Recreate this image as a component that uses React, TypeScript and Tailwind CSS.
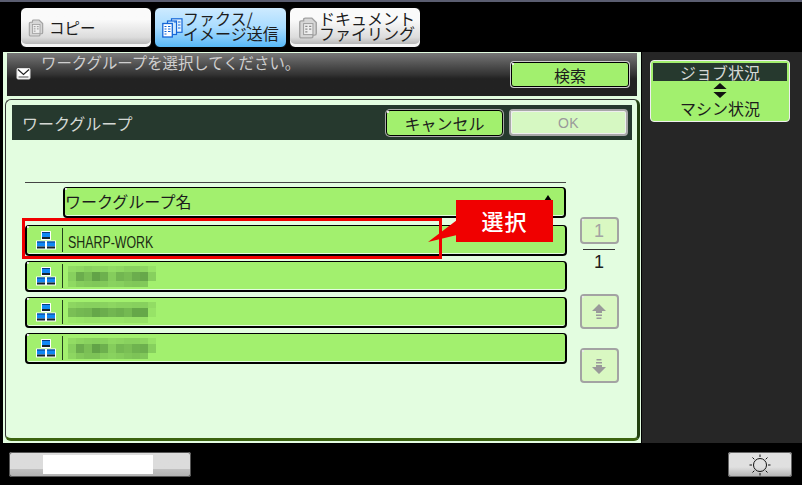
import React from "react";

const FONT = "[font-family:'Noto_Sans_CJK_JP','Noto_Sans',sans-serif]";

function Dot() {
  return <span className="absolute left-0 top-0 h-[2px] w-[2px] bg-[#e8e8e8]" />;
}

function DocsIcon({ w, h }: { w: number; h: number }) {
  return (
    <svg width={w} height={h} viewBox="0 0 18 20" className="shrink-0">
      <path d="M1.500 5 Q1.500 3.500 3 3.500 H5 V2 Q5 1 6.500 1 H12.500 L16.500 5 V15 Q16.500 16.500 15 16.500 H13.500 V17.500 Q13.500 19 12 19 H3 Q1.500 19 1.500 17.500 Z" fill="#d6d6d6" stroke="#a2a2a2" strokeWidth="1.300" />
      <rect x="5" y="6" width="8.500" height="10" fill="#eeeeee" stroke="#9c9c9c" strokeWidth="0.900" />
      <path d="M6.500 8.500h2M6.500 11h2M6.500 13.500h2M10 8.500h2M10 11h2" stroke="#8a8a8a" strokeWidth="1" />
    </svg>
  );
}

function FaxIcon() {
  return (
    <svg width="21" height="20" viewBox="0 0 21 20" className="shrink-0">
      <rect x="9.500" y="0.800" width="10.500" height="13.500" fill="#e8f6ff" stroke="#1466d8" strokeWidth="1.200" />
      <rect x="5.500" y="3" width="9" height="13.500" fill="#cfeaff" stroke="#1466d8" strokeWidth="1.200" />
      <rect x="0.800" y="5.500" width="9.500" height="13.500" fill="#fff" stroke="#1466d8" strokeWidth="1.300" />
      <path d="M2.500 8.500h2M2.500 11h2M2.500 13.500h2M2.500 16h2M6 8.500h2.500M6 11h2.500M6 13.500h2.500M12 4h2M16 4h2.500M16 7h2.500M16 10h2.500" stroke="#1466d8" strokeWidth="1" />
    </svg>
  );
}

function Pc({ x, y }: { x: number; y: number }) {
  return (
    <g transform={`translate(${x} ${y})`}>
      <rect x="0" y="0" width="10" height="9" rx="0.500" fill="#fff" />
      <rect x="1" y="1" width="8" height="5" fill="#1088f4" />
      <rect x="1" y="1" width="8" height="1" fill="#0a3a80" />
      <rect x="1" y="6" width="8" height="2" fill="#16242e" />
    </g>
  );
}

function NetIcon() {
  return (
    <svg width="20" height="19" viewBox="0 0 20 19" className="shrink-0">
      <Pc x={5} y={0} />
      <Pc x={0} y={9.500} />
      <Pc x={10} y={9.500} />
    </svg>
  );
}

// alpha values of the pixelated (masked) names, one list per band
const MOSAICS: number[][][] = [
  [
    [0.12, 0.14, 0.18, 0.16, 0.16, 0.12, 0.14, 0.18, 0.18, 0.16, 0.08],
    [0.2, 0.42, 0.32, 0.48, 0.4, 0.22, 0.36, 0.32, 0.42, 0.45, 0.2],
    [0.14, 0.22, 0.24, 0.26, 0.24, 0.18, 0.2, 0.24, 0.26, 0.24, 0],
  ],
  [
    [0.16, 0.18, 0.2, 0.2, 0.18, 0.16, 0.18, 0.18, 0.2, 0.2, 0.12],
    [0.3, 0.34, 0.36, 0.46, 0.42, 0.36, 0.4, 0.34, 0.46, 0.46, 0.08],
    [0.05, 0.07, 0.09, 0.09, 0.07, 0.07, 0.07, 0.09, 0.09, 0.09, 0],
  ],
  [
    [0.12, 0.16, 0.18, 0.2, 0.18, 0.14, 0.16, 0.18, 0.18, 0.16, 0.08],
    [0.2, 0.42, 0.3, 0.48, 0.4, 0.22, 0.34, 0.3, 0.38, 0.4, 0.2],
    [0.16, 0.24, 0.28, 0.28, 0.22, 0.18, 0.22, 0.26, 0.28, 0.26, 0],
  ],
];

function Mosaic({ data }: { data: number[][] }) {
  const heights = ["h-[6px]", "h-[9px]", "h-[6px]"];
  return (
    <div className="ml-[4px] flex flex-col">
      {data.map((band, i) => (
        <div key={i} className={`flex ${heights[i]}`}>
          {band.map((a, j) => (
            <span key={j} className="h-full w-[8px]" style={{ backgroundColor: `rgba(30,80,30,${a})` }} />
          ))}
        </div>
      ))}
    </div>
  );
}

function Row({ children }: { children: React.ReactNode }) {
  return (
    <div className="relative flex h-[31px] w-[542px] items-center rounded-[4px] border border-b-2 border-l-2 border-r-2 border-black bg-[#a2f06e] shadow-[inset_0_-1px_0_#e3fde0]">
      <Dot />
      <div className="ml-[9px] flex w-[26px] shrink-0 items-center justify-start">
        <NetIcon />
      </div>
      <div className="mr-[1px] h-[24px] w-[1px] shrink-0 bg-[#22401c]" />
      {children}
    </div>
  );
}

function PagerButton({ children, h }: { children: React.ReactNode; h: string }) {
  return (
    <div className={`relative flex w-[39px] items-center justify-center rounded-[4px] border-2 border-[#a3a3a3] bg-[#d9f8c2] ${h}`}>
      <Dot />
      {children}
    </div>
  );
}

function Tab({ children, active }: { children: React.ReactNode; active?: boolean }) {
  return (
    <div
      className={`flex h-[41px] items-center rounded-[6px] border border-black ${
        active
          ? "w-[133px] bg-gradient-to-b from-[#cdeaff] via-[#a9dcff] to-[#56b8f6]"
          : "w-[132px] bg-gradient-to-b from-[#fafafa] from-30% via-[#dcdcdc] via-75% to-[#a8a8a8] shadow-[inset_0_-3px_0_#f4f4f4]"
      }`}
    >
      {children}
    </div>
  );
}

export default function App() {
  return (
    <div className={`relative flex h-[485px] w-[802px] flex-col overflow-hidden bg-black text-[16px] text-[#1c1c1c] ${FONT}`}>
      <div className="h-[2px] bg-[#5a5d70]" />

      {/* tabs */}
      <div className="flex h-[50px] gap-[2px] pl-[20px] pt-[5px]">
        <Tab>
          <span className="ml-[7px] flex w-[16px] justify-center"><DocsIcon w={16} h={18} /></span>
          <span className="ml-[5px] text-[15.5px] leading-none">コピー</span>
        </Tab>
        <Tab active>
          <span className="ml-[7px] flex w-[21px] justify-center"><FaxIcon /></span>
          <span className="mb-[3px] flex flex-col pl-[0px] text-[16px] leading-[15px]">
            <span>ファクス/</span>
            <span>イメージ送信</span>
          </span>
        </Tab>
        <Tab>
          <span className="ml-[7px] flex w-[21px] justify-center"><DocsIcon w={20} h={22} /></span>
          <span className="mb-[3px] ml-[1px] flex flex-col text-[16px] leading-[15px]">
            <span>ドキュメント</span>
            <span>ファイリング</span>
          </span>
        </Tab>
      </div>

      {/* body */}
      <div className="flex h-[391px]">
        <div className="ml-[3px] flex w-[638px] flex-col bg-[#e3fde0]">
          {/* message bar */}
          <div className="ml-[4px] mt-[1px] flex h-[43px] w-[630px] items-start bg-gradient-to-b from-[#777] via-[#333] via-50% to-[#222] to-60%">
            <svg width="16" height="14" viewBox="0 0 16 14" className="ml-[9px] mt-[14px] shrink-0">
              <rect x="1" y="1.500" width="13" height="10.500" rx="1" fill="#fff" stroke="#ddd" />
              <path d="M2 2.500 L7.500 7.500 L13 2.500" fill="none" stroke="#222" strokeWidth="1.200" />
              <rect x="2.500" y="9.500" width="10" height="1" fill="#444" />
            </svg>
            <span className="ml-[9px] mt-[-2px] text-[15.4px] leading-[22px] text-[#cfcfcf]">ワークグループを選択してください。</span>
            <div className="relative ml-auto mr-[8px] mt-[9px] flex h-[25px] w-[118px] items-center justify-center rounded-[3px] border-[1.5px] border-black bg-[#a2f06e] shadow-[0_0_0_1px_#ccc]">
              <Dot />
              <span className="leading-none">検索</span>
            </div>
          </div>

          {/* panel */}
          <div className="ml-[2px] mt-[3px] flex h-[342px] w-[635px] flex-col rounded-[6px] border-b-[3px] border-l border-r-[3px] border-t border-b-[#3c6410] border-l-[#333] border-r-[#224010] border-t-[#333] px-[6px] pt-[5px]">
            <div className="flex h-[35px] w-[620px] items-center bg-[#26392e] pl-[10px] pr-[4px]">
              <span className="text-[16px] leading-none text-[#d4d8d4]">ワークグループ</span>
              <div className="relative ml-auto flex h-[26px] w-[117px] items-center justify-center rounded-[4px] border-[1.5px] border-black bg-[#a2f06e] shadow-[0_0_0_1px_#aaa]">
                <Dot />
                <span className="leading-none">キャンセル</span>
              </div>
              <div className="relative ml-[6px] flex h-[27px] w-[119px] items-center justify-center rounded-[4px] border-2 border-[#a8a8a8] bg-[#d6f8c2] shadow-[inset_0_0_0_1px_#eee]">
                <Dot />
                <span className="text-[14px] font-medium leading-none tracking-[0.5px] text-[#9a9a9a] [font-family:'Liberation_Sans',sans-serif]">OK</span>
              </div>
            </div>

            <div className="flex">
              <div className="ml-[13px] flex w-[541px] flex-col pt-[42px]">
                <div className="h-[1px] w-[541px] bg-[#444]" />
                <div className="relative ml-[38px] mt-[4px] flex h-[31px] w-[503px] items-center rounded-[4px] border border-b-2 border-l-2 border-r-2 border-black bg-[#a2f06e] pb-[2px] shadow-[inset_0_-1px_0_#e3fde0]">
                  <Dot />
                  <span className="leading-none">ワークグループ名</span>
                  <span className="absolute right-[12px] top-[7px] h-0 w-0 border-x-[4px] border-b-[6px] border-x-transparent border-b-black" />
                </div>
                <div className="mt-[7px] flex flex-col gap-[5px]">
                  <Row>
                    <span className="ml-[4px] mt-[4px] origin-left scale-x-[0.75] text-[16.5px] leading-none text-[#1c2c14] [font-family:'Liberation_Sans',sans-serif]">SHARP-WORK</span>
                  </Row>
                  {MOSAICS.map((m, i) => (
                    <Row key={i}>
                      <Mosaic data={m} />
                    </Row>
                  ))}
                </div>
              </div>

              <div className="ml-[13px] flex w-[40px] flex-col items-center pt-[77px]">
                <PagerButton h="h-[27px]">
                  <span className="text-[18px] leading-none text-[#a3a3a3] [font-family:'Liberation_Sans',sans-serif]">1</span>
                </PagerButton>
                <div className="mt-[5px] h-[1px] w-[32px] bg-[#333]" />
                <span className="mt-[3px] text-[18px] leading-[18px] [font-family:'Liberation_Sans',sans-serif]">1</span>
                <div className="mt-[23px]">
                  <PagerButton h="h-[35px]">
                    <svg width="16" height="18" viewBox="0 0 16 18">
                      <path d="M8 1 L15 8 H11 V10 H5 V8 H1 Z M5 11.500 H11 V13 H5 Z M5.500 14.500 H10.500 V16 H5.500 Z" fill="#9a9a9a" />
                    </svg>
                  </PagerButton>
                </div>
                <div className="mt-[19px]">
                  <PagerButton h="h-[35px]">
                    <svg width="16" height="18" viewBox="0 0 16 18">
                      <path d="M8 17 L15 10 H11 V8 H5 V10 H1 Z M5 6.500 H11 V5 H5 Z M5.500 3.500 H10.500 V2 H5.500 Z" fill="#9a9a9a" />
                    </svg>
                  </PagerButton>
                </div>
              </div>
            </div>
          </div>
        </div>

        {/* sidebar */}
        <div className="ml-[1px] w-[160px] bg-[#262626] pl-[8px] pt-[8px]">
          <div className="flex h-[62px] w-[140px] flex-col rounded-[4px] border border-[#eeeeee] bg-[#a2f06e] p-[2px]">
            <div className="flex h-[18px] items-center justify-center bg-[#26392e] pb-[1px] text-[16px] leading-none text-[#d4d8d4]">ジョブ状況</div>
            <svg width="16" height="17" viewBox="0 0 16 18" className="mx-auto mt-[1px] shrink-0">
              <path d="M8 1 L15 7.500 H1 Z M8 17 L15 10.500 H1 Z" fill="#111" />
            </svg>
            <div className="mt-[-1px] text-center text-[16px] leading-[20px]">マシン状況</div>
          </div>
        </div>
      </div>

      {/* footer */}
      <div className="flex flex-1 items-start pl-[9px] pr-[10px] pt-[9px]">
        <div className="flex h-[25px] w-[182px] justify-center rounded-[3px] bg-gradient-to-b from-[#dcdcdc] from-70% via-[#c0c0c0] to-[#b0b0b0] pr-[2px] shadow-[inset_0_0_0_1px_#555]">
          <div className="ml-[-3px] mt-[3px] h-[19px] w-[110px] bg-white" />
        </div>
        <div className="ml-auto flex h-[25px] w-[64px] items-center justify-center rounded-[3px] bg-gradient-to-b from-[#e0e0e0] from-60% to-[#b0b0b0] shadow-[inset_0_0_0_1px_#666]">
          <svg width="22" height="22" viewBox="0 0 22 22" fill="none" stroke="#111" strokeWidth="1">
            <circle cx="11" cy="11" r="6.500" />
            <path d="M11 0.500v2.500M11 19v2.500M0.500 11h2.500M19 11h2.500M3.500 3.500l1.800 1.800M16.700 16.700l1.800 1.800M3.500 18.500l1.800-1.800M16.700 5.300l1.800-1.800" />
          </svg>
        </div>
      </div>

      {/* annotation overlay */}
      <div className="absolute left-[22px] top-[218px] h-[41px] w-[420px] border-[3px] border-[#f00000]" />
      <svg width="30" height="24" viewBox="0 0 30 24" className="absolute left-[428px] top-[219px]">
        <path d="M29 1 L0 23 L29 16 Z" fill="#f00000" />
      </svg>
      <div className="absolute left-[456px] top-[200px] flex h-[42px] w-[97px] items-center justify-center bg-[#f00000] pb-[3px] text-[22px] font-medium leading-none tracking-[1px] text-white">選択</div>
    </div>
  );
}
